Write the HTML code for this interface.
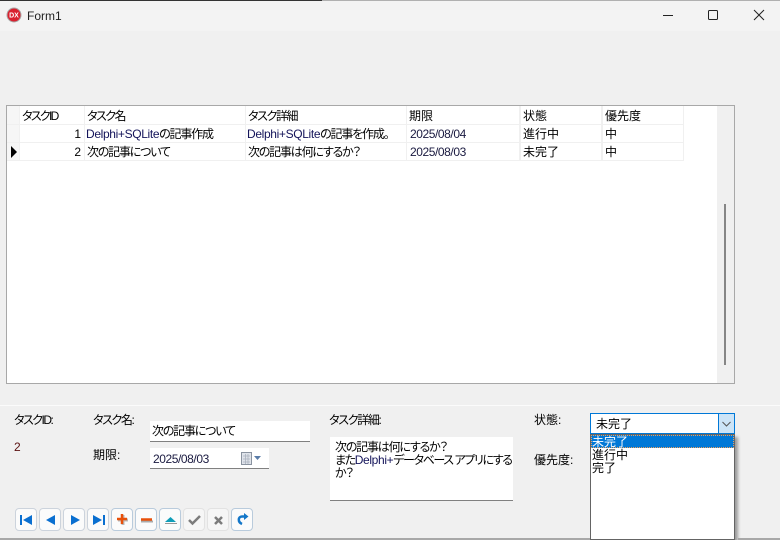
<!DOCTYPE html>
<html lang="ja"><head><meta charset="utf-8"><title>Form1</title>
<style>
html,body{margin:0;padding:0;background:#f0f0f0}
#r{position:relative;width:780px;height:540px;overflow:hidden;background:#f0f0f0;font:12px "Liberation Sans","Noto Sans CJK JP",sans-serif;font-feature-settings:"palt";color:#000}
#r div{position:absolute;box-sizing:border-box}
.t{white-space:nowrap;line-height:14px;height:14px}
.n{letter-spacing:-.42px;color:#1a1a40}
.l{color:#14145a;letter-spacing:-.35px}
.c{letter-spacing:-1.2px}
.btn{top:508px;width:22px;height:23px;border:1px solid #ccd3dc;border-radius:4px;background:#fbfbfb}
.btn svg{position:absolute;left:0;top:0}
.dis{background:#f6f6f6;border-color:#e2e2e2}
.act{border-color:#b9cbdc}
</style></head><body><div id="r">
<div style="left:0;top:0;width:780px;height:31px;background:#f3f3f3"></div>
<div style="left:0;top:0;width:322px;height:1px;background:#333"></div>
<div style="left:322px;top:0;width:458px;height:1px;background:#b0b0b0"></div>
<svg style="position:absolute;left:6px;top:7px" width="16" height="16"><circle cx="8" cy="8" r="7" fill="#d9202e" stroke="#a9a9a9"/><text x="8" y="10.500" font-size="7" font-weight="bold" fill="#fff" text-anchor="middle" font-family="Liberation Sans">DX</text></svg>
<div class="t" style="left:27px;top:9px;font-size:12px;color:#222">Form1</div>
<svg style="position:absolute;left:660px;top:5px" width="120" height="22" fill="none" stroke="#222" stroke-width="1"><path d="M3 10.500H13"/><rect x="48.500" y="5.500" width="9" height="9" rx="1"/><path d="M94 5L104 15M104 5L94 15"/></svg>

<div style="left:6px;top:105px;width:729px;height:279px;background:#fff;border:1px solid #a8a8a8"></div>
<div style="left:717px;top:106px;width:17px;height:277px;background:#f0f0f0"></div>
<div style="left:724px;top:204px;width:2px;height:161px;background:#868686"></div>
<div style="left:7px;top:106px;width:12px;height:18px;background:#f6f6f6"></div>
<div style="left:7px;top:125px;width:12px;height:17px;background:#f6f6f6"></div>
<div style="left:7px;top:143px;width:12px;height:17px;background:#f6f6f6"></div>
<div style="left:7px;top:124px;width:677px;height:1px;background:#f0f0f0"></div>
<div style="left:7px;top:142px;width:677px;height:1px;background:#f0f0f0"></div>
<div style="left:7px;top:160px;width:677px;height:1px;background:#f0f0f0"></div>
<div style="left:19px;top:106px;width:1px;height:54px;background:#f0f0f0"></div>
<div style="left:84px;top:106px;width:1px;height:54px;background:#f0f0f0"></div>
<div style="left:245px;top:106px;width:1px;height:54px;background:#f0f0f0"></div>
<div style="left:406px;top:106px;width:1px;height:54px;background:#f0f0f0"></div>
<div style="left:519px;top:106px;width:2px;height:54px;background:#f0f0f0"></div>
<div style="left:601px;top:106px;width:2px;height:54px;background:#f0f0f0"></div>
<div style="left:683px;top:106px;width:1px;height:54px;background:#f0f0f0"></div>
<svg style="position:absolute;left:10px;top:146px" width="9" height="12"><path d="M1 0L7 6L1 12Z" fill="#000"/></svg>

<div class="t" style="left:22px;top:109px;letter-spacing:-1.7px">タスクID</div>
<div class="t" style="left:87px;top:109px;letter-spacing:-1.500px">タスク名</div>
<div class="t" style="left:248px;top:109px;letter-spacing:-1.400px">タスク詳細</div>
<div class="t" style="left:409px;top:109px">期限</div>
<div class="t" style="left:523px;top:109px">状態</div>
<div class="t" style="left:605px;top:109px">優先度</div>

<div class="t" style="left:60px;width:21px;top:127px;text-align:right">1</div>
<div class="t" style="left:86px;top:127px"><span class="l">Delphi+SQLite</span><span class="c">の記事作成</span></div>
<div class="t" style="left:247px;top:127px"><span class="l">Delphi+SQLite</span><span class="c">の記事を作成。</span></div>
<div class="t n" style="left:410px;top:127px">2025/08/04</div>
<div class="t" style="left:523px;top:127px">進行中</div>
<div class="t" style="left:605px;top:127px">中</div>

<div class="t" style="left:60px;width:21px;top:145px;text-align:right">2</div>
<div class="t c" style="left:87px;top:145px">次の記事について</div>
<div class="t c" style="left:248px;top:145px">次の記事は何にするか？</div>
<div class="t n" style="left:410px;top:145px">2025/08/03</div>
<div class="t" style="left:523px;top:145px">未完了</div>
<div class="t" style="left:605px;top:145px">中</div>

<div style="left:0;top:405px;width:780px;height:1px;background:#fbfbfb"></div>
<div class="t" style="left:14px;top:413px;letter-spacing:-1.500px">タスクID:</div>
<div class="t" style="left:14px;top:440px;color:#5a1010">2</div>
<div class="t" style="left:93px;top:413px;letter-spacing:-1.400px">タスク名:</div>
<div class="t" style="left:93px;top:448px">期限:</div>
<div style="left:150px;top:421px;width:160px;height:21px;background:#fff;border-bottom:1px solid #808080"></div>
<div class="t c" style="left:152px;top:424px">次の記事について</div>
<div style="left:150px;top:448px;width:119px;height:21px;background:#fff;border-bottom:1px solid #808080"></div>
<div class="t n" style="left:153px;top:452px">2025/08/03</div>
<svg style="position:absolute;left:240px;top:451px" width="24" height="15"><rect x="1.500" y="1.500" width="10" height="12" fill="#dfe3ea" stroke="#8a93a0"/><path d="M3 5H10M3 8H10M3 11H10M5.500 3V13M8 3V13" stroke="#aab2be" stroke-width=".8"/><path d="M14 5H21L17.500 9Z" fill="#5a7ca8"/></svg>

<div class="t" style="left:329px;top:413px;letter-spacing:-1.300px">タスク詳細:</div>
<div style="left:330px;top:437px;width:183px;height:64px;background:#fff;border-bottom:1px solid #808080"></div>
<div class="t c" style="left:335px;top:440px">次の記事は何にするか？</div>
<div class="t" style="left:335px;top:453px;letter-spacing:-1.400px">また<span class="l">Delphi+</span>データベース アプリにする</div>
<div class="t c" style="left:335px;top:466px">か？</div>

<div class="t" style="left:534px;top:413px">状態:</div>
<div class="t" style="left:534px;top:453px">優先度:</div>
<div style="left:590px;top:413px;width:145px;height:21px;background:#fff;border:1px solid #0078d7"></div>
<div style="left:718px;top:413px;width:17px;height:21px;background:#cce4f7;border:1px solid #0078d7"></div>
<svg style="position:absolute;left:718px;top:413px" width="17" height="21" fill="none" stroke="#555"><path d="M4.500 9L8.500 13L12.500 9"/></svg>
<div class="t" style="left:596px;top:417px">未完了</div>
<div style="left:590px;top:434px;width:145px;height:106px;background:#fff;border:1px solid #646464;box-shadow:3px 3px 3px rgba(0,0,0,.35)"></div>
<div style="left:591px;top:435px;width:143px;height:13px;background:#0078d7;border:1px dotted #e8a060"></div>
<div class="t" style="left:592px;top:435px;color:#fff">未完了</div>
<div class="t" style="left:592px;top:448px">進行中</div>
<div class="t" style="left:592px;top:461px">完了</div>

<div class="btn" style="left:15px"><svg width="22" height="23"><path d="M5 6V16" stroke="#0a6fd0" stroke-width="2"/><path d="M16 6V16L7 11Z" fill="#0a6fd0"/></svg></div>
<div class="btn" style="left:39px"><svg width="22" height="23"><path d="M15 6V16L6 11Z" fill="#0a6fd0"/></svg></div>
<div class="btn" style="left:63px"><svg width="22" height="23"><path d="M7 6V16L16 11Z" fill="#0a6fd0"/></svg></div>
<div class="btn" style="left:87px"><svg width="22" height="23"><path d="M5 6V16L14 11Z" fill="#0a6fd0"/><path d="M16 6V16" stroke="#0a6fd0" stroke-width="2"/></svg></div>
<div class="btn act" style="left:111px"><svg width="22" height="23"><path d="M11 6V16M6 11H16" stroke="#777" stroke-width="3" opacity=".5"/><path d="M10 5V15M5 10H15" stroke="#e8500a" stroke-width="2.500"/></svg></div>
<div class="btn act" style="left:135px"><svg width="22" height="23"><path d="M5 12.500H17" stroke="#aaa" stroke-width="2"/><path d="M5 10.500H16" stroke="#e8500a" stroke-width="2.500"/></svg></div>
<div class="btn act" style="left:159px"><svg width="22" height="23"><path d="M5 13L10.500 8L16 13Z" fill="#0f9db8"/><path d="M5 14.500H17" stroke="#999"/></svg></div>
<div class="btn dis" style="left:183px"><svg width="22" height="23"><path d="M5 11L8.500 14.500L16 7" fill="none" stroke="#7c7c7c" stroke-width="2.500"/></svg></div>
<div class="btn dis" style="left:207px"><svg width="22" height="23"><path d="M7 8L14 15M14 8L7 15" stroke="#7c7c7c" stroke-width="2.500"/></svg></div>
<div class="btn act" style="left:231px"><svg width="22" height="23"><path d="M10 15C5.500 13 6 7.500 10 7.500H13" fill="none" stroke="#1477c9" stroke-width="2.500"/><path d="M12 4V11L16.500 7.500Z" fill="#1477c9"/></svg></div>

<div style="left:0;top:538px;width:590px;height:2px;background:#a8a8a8"></div>
<div style="left:738px;top:538px;width:42px;height:2px;background:#a8a8a8"></div>
</div></body></html>
